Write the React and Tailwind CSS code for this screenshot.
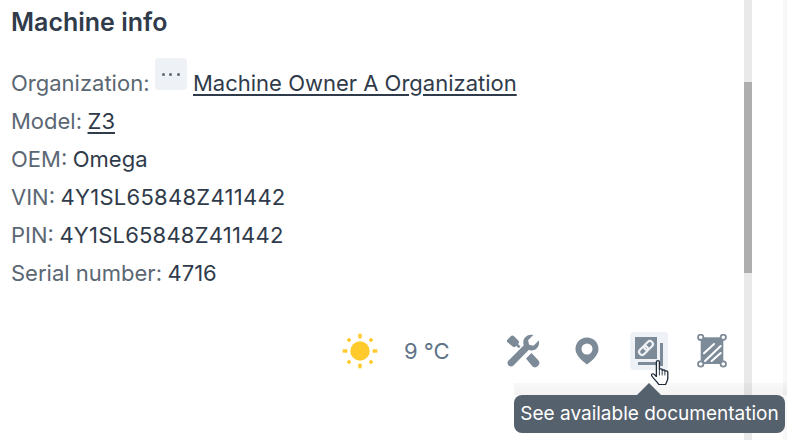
const inter = 'font-["Inter",sans-serif]';

function Row({ label, children }) {
  return (
    <div className="h-[38px] flex items-center whitespace-nowrap">
      <span className="text-[#5b6773]">{label}:</span>
      <span className="ml-[5.5px] text-[#2f3b4a] flex items-center">{children}</span>
    </div>
  );
}

const rays = [0, 90, 180, 270];
const diagonals = [45, 135, 225, 315];

function Sun() {
  return (
    <svg width="36" height="36" viewBox="0 0 36 36">
      <circle cx="18" cy="18" r="9.700" fill="#ffca2c" />
      {rays.map((r) => (
        <rect key={r} x="16.300" y="0.700" width="3.400" height="4.600" fill="#ffca2c" transform={`rotate(${r} 18 18)`} />
      ))}
      {diagonals.map((r) => (
        <rect key={r} x="16.300" y="0.800" width="3.400" height="3.400" rx="0.600" fill="#ffca2c" transform={`rotate(${r} 18 18)`} />
      ))}
    </svg>
  );
}

function Tools() {
  return (
    <svg width="36" height="36" viewBox="0 0 36 36" fill="#7d8b99">
      {/* screwdriver grip, upper left */}
      <path d="M2.500 6.500 6 3c.8-.8 2-.8 2.800 0l4.700 4.700c.8.800.8 2 0 2.800l-.5.500 2.500 2.500-1.800 1.800-2.500-2.500-.7.700c-.8.800-2 .8-2.800 0L2.500 9.300c-.8-.8-.8-2 0-2.800z" />
      {/* wrench */}
      <path d="M33.800 7.500 28.500 12.700l-4.400-1-1-4.400 5.200-5.300c-5-1.500-10.400 2.200-10 8 .1.900.3 1.600.5 2.300L3.300 27.800c-2.600 3.300 1.600 7.400 4.900 4.900l15.500-15.600c6.300 2.100 11.800-3.300 10.100-9.600z" />
      {/* screwdriver shaft, lower right */}
      <path d="M21 25.500 26.500 20l6.800 7.300c1.500 1.500 1.500 3.800 0 5.300l-.7.700c-1.500 1.500-3.800 1.500-5.300 0z" />
    </svg>
  );
}

function Pin() {
  return (
    <svg width="26" height="30" viewBox="0 0 26 30">
      <path fillRule="evenodd" fill="#7d8b99" d="M13 1.500C6.500 1.500 1.500 6.500 1.500 13c0 6 5.500 11 11.500 15.500C19 24 24.500 19 24.500 13 24.500 6.500 19.500 1.500 13 1.500zm0 6a5.500 5.500 0 1 1 0 11 5.500 5.500 0 0 1 0-11z" />
    </svg>
  );
}

function DocLink() {
  return (
    <svg width="36" height="36" viewBox="0 0 36 36" fill="none">
      <rect x="4" y="4" width="22" height="22" fill="#7d8b99" />
      <rect x="29" y="10" width="3" height="23" fill="#7d8b99" />
      <rect x="7" y="29" width="25" height="3" fill="#7d8b99" />
      <g stroke="#eef1f5" strokeWidth="2.200" fill="none" transform="rotate(-45 15 15)">
        <rect x="6.500" y="12" width="10" height="6" rx="3" />
        <rect x="13.500" y="12" width="10" height="6" rx="3" />
      </g>
    </svg>
  );
}

function Area() {
  return (
    <svg width="32" height="34" viewBox="0 0 32 34">
      <rect x="4.700" y="3.300" width="22.600" height="26.700" fill="#7d8b99" />
      {[[4.700, 3.300], [27.300, 3.300], [4.700, 30], [27.300, 30]].map(([x, y]) => (
        <circle key={`${x}-${y}`} cx={x} cy={y} r="2.700" fill="#fff" stroke="#7d8b99" strokeWidth="1.800" />
      ))}
      <g stroke="#fff" strokeWidth="2" strokeLinecap="round">
        <path d="M8 19.300 18 10" />
        <path d="M9 27 24.700 12" />
        <path d="M15.700 27 24.700 19" />
      </g>
    </svg>
  );
}

function Cursor() {
  return (
    <svg width="18" height="25" viewBox="1 0.500 15 23.500" preserveAspectRatio="none">
      <path
        d="M5.500 2.200c0-1.500 2.500-1.500 2.500 0v7.300c0-1 2.300-1 2.300 0v1c0-1 2.300-1 2.300 0v1c0-1 2.400-1 2.400 .2v6c0 2.500-1.500 4.300-1.800 5.800H7.500C6.500 21.500 3.500 18.500 1.700 15.500c-.8-1.500 .8-2.800 2-1.500l1.800 2z"
        fill="#fff"
        stroke="#1f2937"
        strokeWidth="1.100"
        strokeLinejoin="round"
      />
      <path d="M8 10v5M10.300 11v4M12.600 12v3" stroke="#1f2937" strokeWidth=".8" />
    </svg>
  );
}

export default function App() {
  return (
    <div className={`relative w-[787px] h-[440px] overflow-hidden bg-white flex ${inter}`}>
      {/* Panel content */}
      <div className="w-[744px] h-full pl-[11px] pt-[7px] text-[22px]">
        <h2 className="text-[25px] leading-[30px] font-semibold text-[#2f3b4a]">Machine info</h2>

        <div className="mt-[27px]">
          <Row label="Organization">
            <button className="w-8 h-8 -mt-[18px] mr-[6px] bg-[#eef1f5] rounded flex items-center justify-center">
              <span className="flex gap-[4.500px]">
                <i className="w-[3px] h-[3px] rounded-full bg-[#5b6773]" />
                <i className="w-[3px] h-[3px] rounded-full bg-[#5b6773]" />
                <i className="w-[3px] h-[3px] rounded-full bg-[#5b6773]" />
              </span>
            </button>
            <a className="underline decoration-2 underline-offset-[3px]">Machine Owner A Organization</a>
          </Row>
          <Row label="Model">
            <a className="underline decoration-2 underline-offset-[3px]">Z3</a>
          </Row>
          <Row label="OEM">Omega</Row>
          <Row label="VIN"><span className="tracking-[0.27px]">4Y1SL65848Z411442</span></Row>
          <Row label="PIN"><span className="tracking-[0.22px]">4Y1SL65848Z411442</span></Row>
          <Row label="Serial number">4716</Row>
        </div>

        {/* Action icons */}
        <div className="mt-[40px] flex items-center justify-end">
          <Sun />
          <span className="ml-[26px] w-[45px] text-[#5f7388] whitespace-nowrap">9 °C</span>
          <span className="ml-[56px] w-[36px] flex justify-center"><Tools /></span>
          <span className="ml-[33px] w-[26px] flex justify-center"><Pin /></span>
          <span className="ml-[30px] w-[38px] h-[38px] rounded bg-[#eef1f5] flex items-center justify-center"><DocLink /></span>
          <span className="ml-[28px] mr-[16px] w-[32px] flex justify-center"><Area /></span>
        </div>
      </div>

      {/* Scrollbar */}
      <div className="w-2 h-full bg-[#e9e9e9] flex flex-col">
        <div className="mt-[82px] h-[191px] bg-[#aeaeae]" />
      </div>
      <div className="flex-1 h-full flex justify-end">
        <div className="w-1 h-full bg-[#f7f7f7]" />
      </div>

      {/* Tooltip shadow, tooltip and pointer */}
      <div className="absolute left-[514px] right-0 top-[383px] h-3 bg-linear-to-b from-black/[.025] to-black/[.05]" />
      <div className="absolute left-[514px] top-[395px] w-[271px] h-[38px] rounded-lg bg-[#55616d] text-white text-[19px] flex items-center justify-center whitespace-nowrap">
        See available documentation
      </div>
      <div className="absolute left-[637px] top-[383px] w-0 h-0 border-x-[12px] border-x-transparent border-b-[12px] border-b-[#55616d]" />
      <div className="absolute left-[651px] top-[360px]"><Cursor /></div>
    </div>
  );
}
